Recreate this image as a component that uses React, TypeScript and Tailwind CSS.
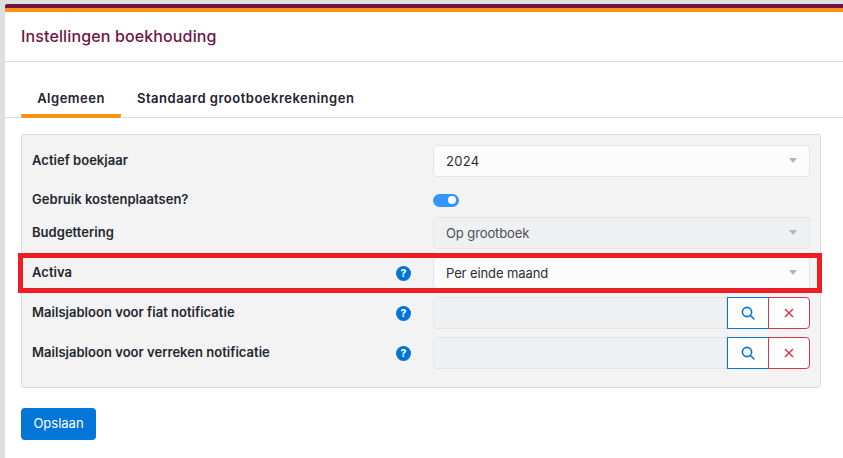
import React from "react";

const Help = () => (
  <span className="flex h-[15px] w-[15px] items-center justify-center rounded-full bg-[#0275d8] text-[10px] font-extrabold leading-none text-white">?</span>
);

const Caret = () => <span className="mb-[1px] h-0 w-0 border-x-[4.5px] border-t-[5px] border-x-transparent border-t-[#b5b5b5]" />;

const Select = ({ value, disabled, wide }: { value: string; disabled?: boolean; wide?: boolean }) => (
  <div className={`flex h-[32px] w-[377px] items-center justify-between rounded-[4px] border border-[#e4e5e7] pl-[12px] pr-[12px] text-[13px] ${wide ? "tracking-[0.3px]" : "tracking-[-0.1px]"} ${disabled ? "bg-[#eff0f2] text-[#4a4f57]" : "bg-[#fcfcfc] text-[#2a2e35]"}`}>
    <span className="pt-[1px]">{value}</span>
    <Caret />
  </div>
);

const Row = ({ label, help, children, className }: { label: string; help?: boolean; children: React.ReactNode; className?: string }) => (
  <div className={`flex items-center ${className ?? ""}`}>
    <div className="flex w-[401px] items-center justify-between pr-[22px] text-[13px] font-semibold tracking-[0.03px] text-[#23272f]">
      <span>{label}</span>
      {help && <Help />}
    </div>
    {children}
  </div>
);

const Lookup = () => (
  <div className="flex h-[32px] w-[377px]">
    <div className="flex-1 rounded-l-[4px] border border-[#e4e5e7] bg-[#eff0f2]" />
    <div className="flex h-[32px] w-[42px] items-center justify-center border border-[#0275d8] bg-white">
      <svg width="14" height="14" viewBox="0 0 14 14" fill="none" stroke="#0275d8" strokeWidth="1.6">
        <circle cx="6" cy="6" r="4.6" />
        <path d="M9.5 9.5 13 13" strokeLinecap="round" />
      </svg>
    </div>
    <div className="-ml-px flex h-[32px] w-[42px] items-center justify-center rounded-r-[4px] border border-[#dc3545] bg-white">
      <svg width="10" height="10" viewBox="0 0 10 10" fill="none" stroke="#dc3545" strokeWidth="1.5">
        <path d="M1 1 9 9M9 1 1 9" />
      </svg>
    </div>
  </div>
);

export default function App() {
  return (
    <div className="h-[458px] w-[843px] overflow-hidden bg-[#dcdee0] pl-[5px] pt-[4px] font-['Inter',sans-serif]">
      <div className="relative h-[454px] bg-white">
        <div className="h-[4px] rounded-tl-[2px] bg-[#6f1546]" />
        <div className="h-[4px] bg-[#fb9214]" />
        <div className="flex h-[50px] items-center border-b border-[#dcdcdc] pl-[16px] pb-[2px] text-[16px] font-medium tracking-[0.13px] text-[#6f1546]">
          Instellingen boekhouding
        </div>
        <div className="mt-[26px] flex h-[30px] border-b border-[#dcdcdc] pl-[16px] text-[13px] font-semibold tracking-[0.5px] text-[#23202f]">
          <div className="flex h-[30px] w-[100px] items-start justify-center rounded-[2px] border-b-[4px] border-[#fb9214] pt-[1px]">Algemeen</div>
          <div className="pl-[16px] pt-[1px]">Standaard grootboekrekeningen</div>
        </div>
        <div className="ml-[16px] mt-[16px] flex h-[254px] w-[800px] flex-col rounded-[3px] border border-[#dcdcdc] bg-[#f3f3f3] pl-[10px] pt-[10px]">
          <Row label="Actief boekjaar"><Select value="2024" wide /></Row>
          <Row label="Gebruik kostenplaatsen?" className="h-[40px] pt-[6px]">
            <div className="flex h-[13px] w-[26px] items-center justify-end rounded-full bg-[#3396ff] pr-[3px]">
              <span className="h-[8px] w-[8px] rounded-full bg-white" />
            </div>
          </Row>
          <Row label="Budgettering"><Select value="Op grootboek" disabled /></Row>
          <Row label="Activa" help className="mt-[8px]"><Select value="Per einde maand" /></Row>
          <Row label="Mailsjabloon voor fiat notificatie" help className="mt-[8px]"><Lookup /></Row>
          <Row label="Mailsjabloon voor verreken notificatie" help className="mt-[8px]"><Lookup /></Row>
        </div>
        <button className="ml-[16px] mt-[20px] block h-[32px] w-[75px] rounded-[4px] bg-[#0275d8] text-[13px] text-white">Opslaan</button>
        <div className="absolute left-[13px] top-[249px] h-[40px] w-[804px] border-[5px] border-[#ee1c25]" />
      </div>
    </div>
  );
}
